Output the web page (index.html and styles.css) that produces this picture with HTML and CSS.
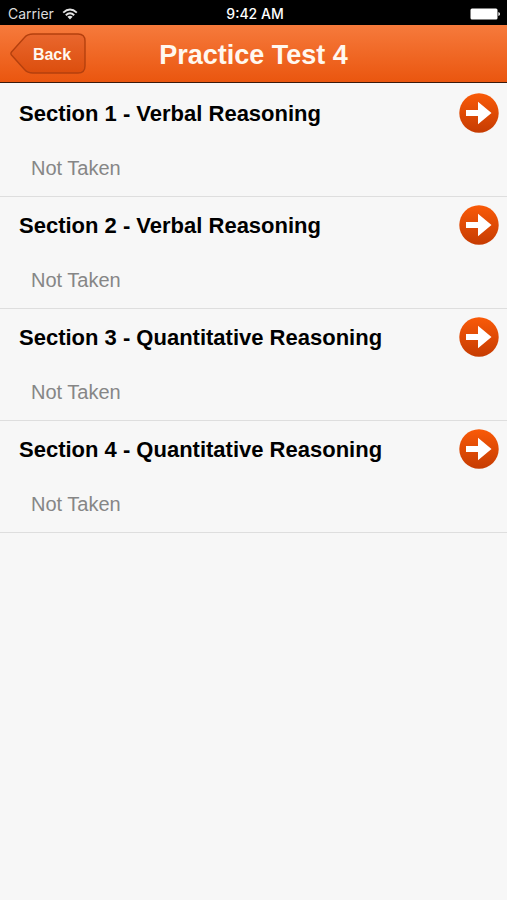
FILE: index.html
```html
<!DOCTYPE html>
<html lang="en">
<head>
<meta charset="utf-8">
<meta name="viewport" content="width=device-width, initial-scale=1">
<title>Practice Test 4</title>
<link rel="stylesheet" href="styles.css">
</head>
<body>
<svg class="defs" aria-hidden="true">
  <defs>
    <linearGradient id="disc" x1="0" y1="0" x2="0" y2="1">
      <stop offset="0" stop-color="#f95a08"/>
      <stop offset="1" stop-color="#c63c02"/>
    </linearGradient>
    <symbol id="go" viewBox="0 0 40 40">
      <circle cx="20" cy="20" r="19.7" fill="url(#disc)"/>
      <path d="M7 17H19V8.800L32.500 20L19 31.200V23H7Z" fill="#fff"/>
    </symbol>
  </defs>
</svg>
<div class="status">
  <div class="carrier">
    <span>Carrier</span>
    <svg class="wifi" viewBox="0 0 16 12" aria-hidden="true">
      <path d="M1.2 4.6Q8-1.6 14.8 4.6M3.8 7.3Q8 3.4 12.2 7.3" fill="none" stroke="#e4e4e4" stroke-width="1.9"/>
      <path d="M5.4 8.8Q8 6.6 10.6 8.8L8 11.6Z" fill="#e4e4e4"/>
    </svg>
  </div>
  <time class="clock">9:42 AM</time>
  <svg class="battery" viewBox="0 0 30 12" aria-hidden="true">
    <rect x="0.5" y="0.5" width="27" height="11" rx="1.5" fill="#fff"/>
    <path d="M28.4 4Q30 4.6 30 6T28.4 8Z" fill="#fff"/>
  </svg>
</div>
<header class="navbar">
  <button class="back" type="button">
    <svg class="back-shape" viewBox="0 0 76 41" aria-hidden="true">
      <defs>
        <linearGradient id="backfill" x1="0" y1="0" x2="0" y2="1">
          <stop offset="0" stop-color="#e9672e"/>
          <stop offset="1" stop-color="#dc4e0d"/>
        </linearGradient>
      </defs>
      <path d="M1.5 19L14.500 4.500Q17.500 1 23 1H68Q75 1 75 8V33Q75 40 68 40H23Q17.500 40 14.500 36.500L1.500 22Q.3 20.500 1.500 19Z" fill="url(#backfill)" stroke="#b4400e" stroke-width="1.400"/>
    </svg>
    <span class="back-label">Back</span>
  </button>
  <h1 class="title">Practice Test 4</h1>
</header>
<main>
  <ul class="sections">
    <li class="section">
      <div class="info"><h2>Section 1 - Verbal Reasoning</h2><p>Not Taken</p></div>
      <button class="go" type="button" aria-label="Open section 1"><svg viewBox="0 0 40 40"><use href="#go"/></svg></button>
    </li>
    <li class="section">
      <div class="info"><h2>Section 2 - Verbal Reasoning</h2><p>Not Taken</p></div>
      <button class="go" type="button" aria-label="Open section 2"><svg viewBox="0 0 40 40"><use href="#go"/></svg></button>
    </li>
    <li class="section">
      <div class="info"><h2>Section 3 - Quantitative Reasoning</h2><p>Not Taken</p></div>
      <button class="go" type="button" aria-label="Open section 3"><svg viewBox="0 0 40 40"><use href="#go"/></svg></button>
    </li>
    <li class="section">
      <div class="info"><h2>Section 4 - Quantitative Reasoning</h2><p>Not Taken</p></div>
      <button class="go" type="button" aria-label="Open section 4"><svg viewBox="0 0 40 40"><use href="#go"/></svg></button>
    </li>
  </ul>
</main>
</body>
</html>
```
FILE: styles.css
```css
* {
  box-sizing: border-box;
}

body {
  margin: 0;
  background: #f7f7f7;
  color: #000;
  font-family: "Liberation Sans", Arial, sans-serif;
}

h1,
h2,
p,
ul {
  margin: 0;
  padding: 0;
}

button {
  padding: 0;
  border: 0;
  background: none;
  font: inherit;
  cursor: pointer;
}

svg {
  display: block;
}

.defs {
  position: absolute;
  width: 0;
  height: 0;
}

.status {
  display: grid;
  grid-template-columns: 1fr auto 1fr;
  align-items: center;
  padding: 2px 7px 0 8px;
  background: #000;
  color: #fff;
  font-family: Inter, sans-serif;
  font-size: 14px;
  line-height: 23px;
}

.carrier {
  display: flex;
  align-items: center;
  gap: 8px;
  color: #dcdcdc;
}

.wifi {
  width: 16px;
  height: 12px;
}

.clock {
  padding-left: 2px;
  font-weight: 500;
}

.battery {
  justify-self: end;
  width: 30px;
  height: 12px;
}

.navbar {
  display: grid;
  grid-template-columns: 1fr auto 1fr;
  align-items: center;
  height: 58px;
  padding: 0 10px;
  border-bottom: 1px solid #3a1a0c;
  background: linear-gradient(#f67a3c, #ea560f);
  color: #fff8f0;
}

.back {
  display: grid;
  justify-self: start;
  align-items: center;
  color: inherit;
}

.back-shape,
.back-label {
  grid-area: 1 / 1;
}

.back-shape {
  width: 76px;
  height: 41px;
}

.back-label {
  padding: 2px 0 0 8px;
  font-size: 16px;
  font-weight: 700;
  line-height: 20px;
}

.title {
  padding-top: 2px;
  font-size: 27px;
  font-weight: 700;
  line-height: 32px;
}

.sections {
  padding-top: 2px;
  list-style: none;
}

.section {
  display: flex;
  align-items: flex-start;
  justify-content: space-between;
  min-height: 112px;
  padding: 8px 8px 0 19px;
  border-bottom: 1px solid #dedede;
}

.info h2 {
  padding-top: 8px;
  font-size: 22px;
  font-weight: 700;
  line-height: 26px;
}

.info p {
  padding: 29px 0 0 12px;
  color: #868686;
  font-size: 20px;
  line-height: 24px;
}

.go {
  flex: none;
}

.go svg {
  width: 40px;
  height: 40px;
}
```
